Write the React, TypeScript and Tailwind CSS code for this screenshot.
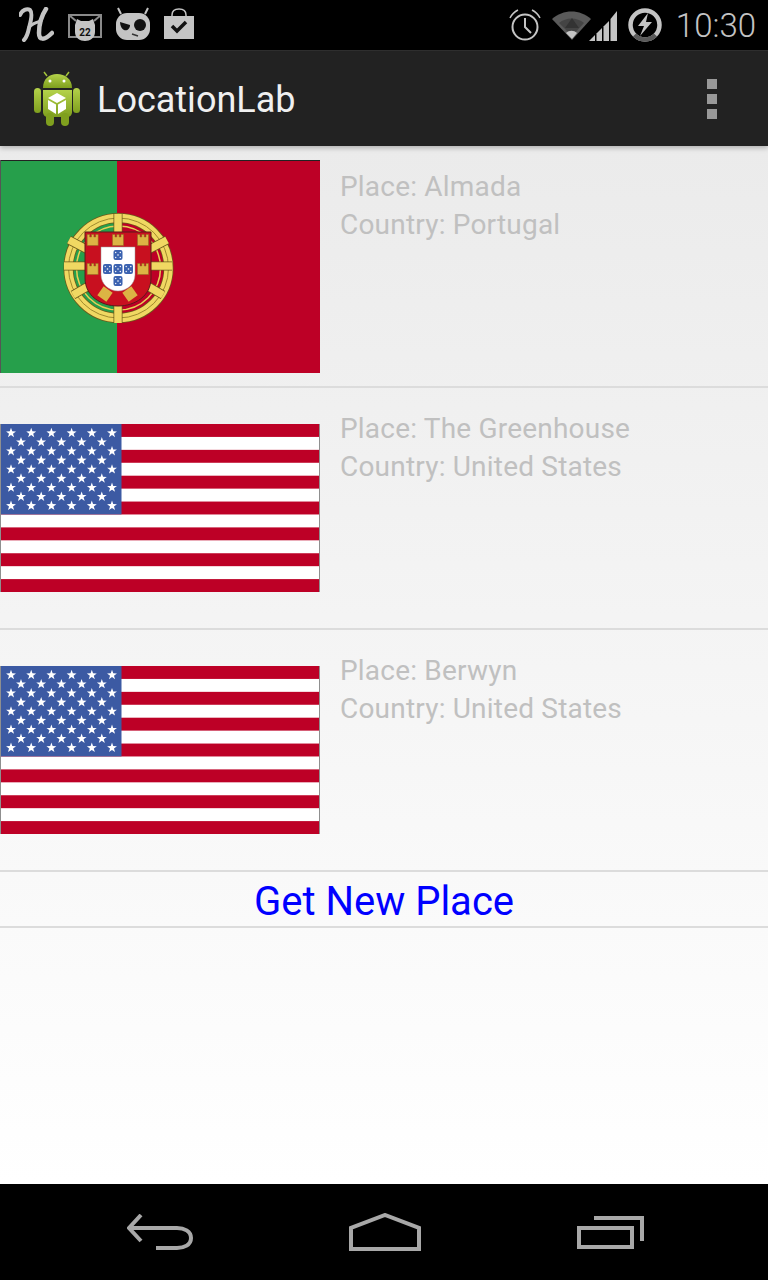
const GREY = "#c4c4c4";

function StatusH() {
  return (
    <svg width="35" height="36" viewBox="0 0 35 36" fill="none" stroke={GREY} strokeLinecap="round">
      <path d="M1 8C3 3 8 1 11 3C14 6 12 14 10 21C9 26 7 31 5 33" strokeWidth="4" />
      <path d="M10 20C14 16 19 15 22 14" strokeWidth="3" />
      <path d="M27 2C23 8 20 18 20 26C20 33 25 34 33 26" strokeWidth="4.5" />
    </svg>
  );
}

function StatusMail() {
  return (
    <svg width="34" height="30" viewBox="0 0 34 30">
      <path d="M1 3H33V25H1Z" fill="none" stroke="#8a8a8a" strokeWidth="2" />
      <path d="M1 3L8 9M33 3L26 9" stroke="#8a8a8a" strokeWidth="2" />
      <path d="M7 13L9 7L13 9H21L25 7L27 13V20C27 26 22 29 17 29C12 29 7 26 7 20Z" fill="#c4c4c4" />
      <text x="17" y="24" textAnchor="middle" fontSize="10" fontWeight="700" fill="#111" fontFamily="Roboto, sans-serif">22</text>
    </svg>
  );
}

function StatusBot() {
  return (
    <svg width="36" height="34" viewBox="0 0 36 34">
      <path d="M6 7L3 1M30 7L33 1" stroke={GREY} strokeWidth="2" />
      <rect x="1" y="6" width="34" height="27" rx="11" fill={GREY} />
      <path d="M5 15L15 18C15 22 12 24 9 23C7 22 5 19 5 15Z" fill="#111" />
      <circle cx="25" cy="18" r="6" fill="#111" />
      <path d="M17 27L23 29" stroke="#333" strokeWidth="1.5" />
    </svg>
  );
}

function StatusBag() {
  return (
    <svg width="32" height="32" viewBox="0 0 32 32">
      <path d="M9 10V7C9 3 12 1 16 1C20 1 23 3 23 7V10" fill="none" stroke={GREY} strokeWidth="1.5" />
      <rect x="1" y="8" width="30" height="23" fill={GREY} />
      <path d="M9 18L14 23L23 14" fill="none" stroke="#111" strokeWidth="3.5" />
    </svg>
  );
}

function StatusAlarm() {
  return (
    <svg width="32" height="32" viewBox="0 0 32 32" fill="none" stroke={GREY}>
      <circle cx="16" cy="18" r="12.5" strokeWidth="2" />
      <path d="M16 9V18L22 24" strokeWidth="2" />
      <path d="M1 9C3 5 5 3 9 1M31 9C29 5 27 3 23 1" strokeWidth="1.5" />
    </svg>
  );
}

function StatusWifi() {
  return (
    <svg width="40" height="30" viewBox="0 0 40 30">
      <path d="M0 9C11 -1 28 -1 39 9L20 30Z" fill="#5a5a5a" />
      <path d="M7 13C14 7 25 7 32 13L20 26Z" fill="#444" />
      <path d="M13 18L20 8L27 18Z" fill="#333" />
      <path d="M14 23C17 20 22 20 25 23L20 29Z" fill="#c4c4c4" />
    </svg>
  );
}

function StatusSignal() {
  return (
    <svg width="28" height="31" viewBox="0 0 28 31" fill={GREY}>
      <path d="M0 31L6 25V31Z" />
      <path d="M7.5 23.5L13 18V31H7.5Z" />
      <path d="M14.5 16.5L20 11V31H14.5Z" />
      <path d="M21.5 9L28 1V31H21.5Z" />
    </svg>
  );
}

function StatusBattery() {
  return (
    <svg width="34" height="34" viewBox="0 0 34 34" fill="none">
      <circle cx="17" cy="17" r="14.5" stroke={GREY} strokeWidth="4.5" />
      <path d="M6.5 27A14.5 14.5 0 0 0 27.5 27" stroke="#5a5a5a" strokeWidth="4.5" />
      <path d="M20 5L10 18H16L12 28L24 14H18Z" fill={GREY} />
    </svg>
  );
}

function AndroidIcon() {
  return (
    <svg width="48" height="56" viewBox="0 0 48 56">
      <defs>
        <linearGradient id="droid" x1="0" y1="0" x2="0" y2="1">
          <stop offset="0" stopColor="#b4d24a" />
          <stop offset="1" stopColor="#7f9f1e" />
        </linearGradient>
      </defs>
      <path d="M14 5L11 1M33 5L36 1" stroke="#a3c43a" strokeWidth="1.5" />
      <path d="M10 17C10 8 16 3 24 3C32 3 39 8 39 17Z" fill="url(#droid)" />
      <circle cx="17" cy="10" r="1.5" fill="#fff" />
      <circle cx="31" cy="10" r="1.5" fill="#fff" />
      <rect x="1" y="17" width="7" height="25" rx="3.5" fill="url(#droid)" />
      <rect x="40" y="17" width="7" height="25" rx="3.5" fill="url(#droid)" />
      <path d="M10 19H39V41C39 44 37 46 34 46H15C12 46 10 44 10 41Z" fill="url(#droid)" />
      <rect x="13" y="42" width="8" height="13" rx="4" fill="#7f9f1e" />
      <rect x="28" y="42" width="8" height="13" rx="4" fill="#7f9f1e" />
      <path d="M24 22L33 27L24 32L15 27Z" fill="#fff" />
      <path d="M15 29L23 33.5V43L15 38Z" fill="#fff" />
      <path d="M33 29L25 33.5V43L33 38Z" fill="#fff" />
    </svg>
  );
}

const strips = [
  "M69 80L92 92",
  "M64 106H92",
  "M73 135L92 124",
  "M167 80L144 92",
  "M172 106H144",
  "M163 135L144 124",
  "M118 54V72",
  "M118 146V163",
];

function PortugalFlag() {
  return (
    <svg width="320" height="213" viewBox="0 0 320 213" className="block">
      <rect width="117" height="213" fill="#269f4b" />
      <rect x="117" width="203" height="213" fill="#bd0026" />
      <path d="M0 0.5H320" stroke="#222" />
      <path d="M0.5 0V213" stroke="#555" />
      <g fill="none">
        <circle cx="118.5" cy="108" r="50" stroke="#6b5a1a" strokeWidth="10" />
        <circle cx="118.5" cy="108" r="50" stroke="#f0d862" strokeWidth="8.5" />
        <circle cx="118.5" cy="108" r="50" stroke="#a08a2c" strokeWidth="1" />
        <circle cx="118.5" cy="108" r="42" stroke="#e8cf55" strokeWidth="1.5" />
        {strips.map((d) => (
          <path key={d} d={d} stroke="#6b5a1a" strokeWidth="9" />
        ))}
        {strips.map((d) => (
          <path key={`${d}-in`} d={d} stroke="#f0d862" strokeWidth="7.5" />
        ))}
      </g>
      <path d="M85 72H151V118C151 136 135 146 118 146C101 146 85 136 85 118Z" fill="#c8101f" stroke="#5a1a1a" strokeWidth="1" />
      <path d="M101 87H135V115C135 124 127 131 118 131C109 131 101 124 101 115Z" fill="#fff" stroke="#999" strokeWidth="0.5" />
      {[
        [118, 95],
        [107.5, 109],
        [118, 109],
        [128.5, 109],
        [118, 121],
      ].map(([x, y]) => (
        <g key={`${x}-${y}`}>
          <rect x={x - 4.5} y={y - 5} width="9" height="10" rx="2" fill="#3b62b0" />
          <circle cx={x} cy={y} r="0.8" fill="#fff" />
          <circle cx={x - 2.3} cy={y - 2.5} r="0.7" fill="#fff" />
          <circle cx={x + 2.3} cy={y - 2.5} r="0.7" fill="#fff" />
          <circle cx={x - 2.3} cy={y + 2.5} r="0.7" fill="#fff" />
          <circle cx={x + 2.3} cy={y + 2.5} r="0.7" fill="#fff" />
        </g>
      ))}
      {[
        [92.7, 80],
        [118, 80],
        [143, 80],
        [92.7, 109],
        [143, 109],
      ].map(([x, y]) => (
        <path key={`${x}-${y}`} d={`M${x - 5.5} ${y + 5.5}V${y - 5.5}H${x - 3}V${y - 3}H${x - 1.2}V${y - 5.5}H${x + 1.2}V${y - 3}H${x + 3}V${y - 5.5}H${x + 5.5}V${y + 5.5}Z`} fill="#dcb444" stroke="#8f6f20" strokeWidth="0.5" />
      ))}
      <rect x="-5.5" y="-5.5" width="11" height="11" fill="#dcb444" transform="translate(105 134) rotate(35)" />
      <rect x="-5.5" y="-5.5" width="11" height="11" fill="#dcb444" transform="translate(130 134) rotate(-35)" />
    </svg>
  );
}

function star(cx: number, cy: number, r: number) {
  const pts: string[] = [];
  for (let i = 0; i < 10; i++) {
    const rad = i % 2 === 0 ? r : r * 0.4;
    const a = (Math.PI / 5) * i - Math.PI / 2;
    pts.push(`${(cx + rad * Math.cos(a)).toFixed(2)},${(cy + rad * Math.sin(a)).toFixed(2)}`);
  }
  return pts.join(" ");
}

function UsFlag() {
  const stars: [number, number][] = [];
  for (let row = 0; row < 9; row++) {
    const y = 9 + row * 9.1;
    const count = row % 2 === 0 ? 6 : 5;
    for (let col = 0; col < count; col++) {
      stars.push([(row % 2 === 0 ? 11 : 21) + col * 20.2, y]);
    }
  }
  return (
    <svg width="320" height="168" viewBox="0 0 320 168" className="block">
      <rect width="320" height="168" fill="#fff" />
      {[0, 1, 2, 3, 4, 5, 6].map((i) => (
        <rect key={i} y={i * 25.85} width="320" height="12.92" fill="#bd0026" />
      ))}
      <path d="M0.5 0V168M319.5 0V168" stroke="#8f8f8f" />
      <rect x="1" width="120.5" height="90.4" fill="#3c5aa3" />
      {stars.map(([x, y]) => (
        <polygon key={`${x}-${y}`} points={star(x, y, 5.2)} fill="#fff" />
      ))}
    </svg>
  );
}

function NavBack() {
  return (
    <svg width="66" height="36" viewBox="0 0 66 36" fill="none" stroke="#a8a8a8" strokeWidth="4">
      <path d="M14 1L2 14L14 27" />
      <path d="M2 14H50C57 14 64 17 64 24C64 31 57 34 50 34H29" />
    </svg>
  );
}

function NavHome() {
  return (
    <svg width="72" height="38" viewBox="0 0 72 38" fill="none" stroke="#a8a8a8" strokeWidth="4">
      <path d="M2 36V15L36 2L70 15V36Z" />
    </svg>
  );
}

function NavRecent() {
  return (
    <svg width="67" height="33" viewBox="0 0 67 33" fill="none" stroke="#a8a8a8" strokeWidth="4">
      <path d="M2 12H55V31H2Z" />
      <path d="M17 2H65V25" />
    </svg>
  );
}

const places = [
  { place: "Almada", country: "Portugal", flag: <PortugalFlag /> },
  { place: "The Greenhouse", country: "United States", flag: <UsFlag /> },
  { place: "Berwyn", country: "United States", flag: <UsFlag /> },
];

export default function App() {
  return (
    <div className="w-[768px] h-[1280px] flex flex-col bg-black font-['Roboto',sans-serif]">
      <div className="h-[50px] flex items-center bg-black">
        <div className="ml-[19px] flex items-center">
          <StatusH />
        </div>
        <div className="ml-[14px] mt-[4px] flex">
          <StatusMail />
        </div>
        <div className="ml-[13px] mt-[-3px] flex">
          <StatusBot />
        </div>
        <div className="ml-[12px] mt-[-2px] flex">
          <StatusBag />
        </div>
        <div className="ml-auto flex items-center">
          <StatusAlarm />
          <div className="ml-[11px] flex">
            <StatusWifi />
          </div>
          <div className="ml-[-3px] flex">
            <StatusSignal />
          </div>
          <div className="ml-[11px] flex">
            <StatusBattery />
          </div>
          <span className="ml-[14px] mr-[12px] text-[33px] leading-none font-light text-[#c4c4c4]">10:30</span>
        </div>
      </div>

      <div className="relative z-10 h-[96px] flex items-center bg-[#222222] border-t border-[#2e2e2e] shadow-[0_2px_5px_rgba(0,0,0,0.25)]">
        <div className="ml-[33px] flex">
          <AndroidIcon />
        </div>
        <span className="ml-[16px] mt-[2px] text-[36px] leading-none text-[#f0f0f0]">LocationLab</span>
        <div className="ml-auto mr-[51px] flex flex-col gap-[5px]">
          <div className="w-[10px] h-[10px] bg-[#999999]" />
          <div className="w-[10px] h-[10px] bg-[#999999]" />
          <div className="w-[10px] h-[10px] bg-[#999999]" />
        </div>
      </div>

      <div className="flex-1 flex flex-col bg-gradient-to-b from-[#ebebeb] to-[#ffffff]">
        {places.map((p, i) => (
          <div key={i} className="h-[242px] flex items-center border-b-2 border-[#dcdcdc]">
            <div className="w-[320px]">{p.flag}</div>
            <div className="ml-[20px] self-start pt-[22px] text-[28px] leading-[38px] tracking-[0.2px] text-[#c0c0c0]">
              <p>Place: {p.place}</p>
              <p>Country: {p.country}</p>
            </div>
          </div>
        ))}
        <div className="h-[56px] pt-[6px] flex items-center justify-center border-b-2 border-[#dcdcdc] text-[40px] leading-none text-[#0000ff]">
          Get New Place
        </div>
      </div>

      <div className="h-[96px] flex items-center justify-between pl-[127px] pr-[124px] bg-black">
        <NavBack />
        <NavHome />
        <NavRecent />
      </div>
    </div>
  );
}
